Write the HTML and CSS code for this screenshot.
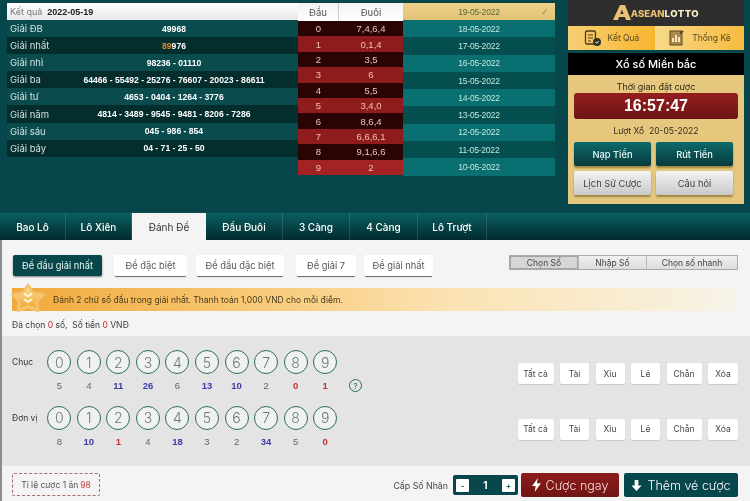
FILE: index.html
```html
<!DOCTYPE html>
<html lang="vi">
<head>
<meta charset="utf-8">
<title>Aseanlotto</title>
<link rel="stylesheet" href="styles.css">
</head>
<body>
<section class="top">
  <div class="results">
    <div class="res-head"><span class="muted">Kết quả</span><b>2022-05-19</b></div>
    <div class="res-row"><span class="res-l">Giải ĐB</span><span class="res-v">49968</span></div>
    <div class="res-row"><span class="res-l">Giải nhất</span><span class="res-v"><em>89</em>976</span></div>
    <div class="res-row"><span class="res-l">Giải nhì</span><span class="res-v">98236 - 01110</span></div>
    <div class="res-row"><span class="res-l">Giải ba</span><span class="res-v">64466 - 55492 - 25276 - 76607 - 20023 - 86611</span></div>
    <div class="res-row"><span class="res-l">Giải tư</span><span class="res-v">4653 - 0404 - 1264 - 3776</span></div>
    <div class="res-row"><span class="res-l">Giải năm</span><span class="res-v">4814 - 3489 - 9545 - 9481 - 8206 - 7286</span></div>
    <div class="res-row"><span class="res-l">Giải sáu</span><span class="res-v">045 - 986 - 854</span></div>
    <div class="res-row"><span class="res-l">Giải bảy</span><span class="res-v">04 - 71 - 25 - 50</span></div>
  </div>
  <div class="heads">
    <div class="h-head"><span class="c1">Đầu</span><span class="c2">Đuôi</span></div>
    <div class="h-row"><span class="c1">0</span><span class="c2">7,4,6,4</span></div>
    <div class="h-row"><span class="c1">1</span><span class="c2">0,1,4</span></div>
    <div class="h-row"><span class="c1">2</span><span class="c2">3,5</span></div>
    <div class="h-row"><span class="c1">3</span><span class="c2">6</span></div>
    <div class="h-row"><span class="c1">4</span><span class="c2">5,5</span></div>
    <div class="h-row"><span class="c1">5</span><span class="c2">3,4,0</span></div>
    <div class="h-row"><span class="c1">6</span><span class="c2">8,6,4</span></div>
    <div class="h-row"><span class="c1">7</span><span class="c2">6,6,6,1</span></div>
    <div class="h-row"><span class="c1">8</span><span class="c2">9,1,6,6</span></div>
    <div class="h-row"><span class="c1">9</span><span class="c2">2</span></div>
  </div>
  <div class="dates">
    <div class="d-row d-on">19-05-2022<i>✓</i></div>
    <div class="d-row">18-05-2022</div>
    <div class="d-row">17-05-2022</div>
    <div class="d-row">16-05-2022</div>
    <div class="d-row">15-05-2022</div>
    <div class="d-row">14-05-2022</div>
    <div class="d-row">13-05-2022</div>
    <div class="d-row">12-05-2022</div>
    <div class="d-row">11-05-2022</div>
    <div class="d-row">10-05-2022</div>
  </div>
  <aside class="side">
    <div class="logo"><svg class="logo-a" viewBox="0 0 18 15" width="18" height="15"><path d="M0 15 7 0h5l6 15h-5l-1-3H6l-1 3z" fill="#e8c172"/><path d="M7.300 9h3.300L9 4.500z" fill="#2e2e2e"/></svg><span class="logo-t">ASEAN</span><span class="logo-u">LOTTO</span></div>
    <div class="s-tabs">
      <div class="s-tab s-tab-on"><svg viewBox="0 0 18 18" width="18" height="18"><rect x="1.500" y="2" width="10" height="13" rx="1.500" fill="none" stroke="#4a3a1c" stroke-width="1.300"/><path d="M4 6h5M4 9h5M4 12h3" stroke="#4a3a1c"/><circle cx="13" cy="13" r="4" fill="#33302a"/><path d="m11.300 13 1.300 1.300 2-2.300" stroke="#fff" fill="none"/></svg>Kết Quả</div>
      <div class="s-tab"><svg viewBox="0 0 18 18" width="18" height="18"><rect x="2" y="2" width="12" height="14" fill="#a88a4a" stroke="#5b4a25"/><path d="M4 13V9h2v4zm3 0V6h2v7zm3 0V8h2v5z" fill="#f6e6b8"/><path d="m12 2 4 0-4 4z" fill="#5b4a25"/></svg>Thống Kê</div>
    </div>
    <div class="s-title">Xổ số Miền bắc</div>
    <div class="s-body">
      <div class="s-cap">Thời gian đặt cược</div>
      <div class="timer">16:57:47</div>
      <div class="s-draw">Lượt Xổ&nbsp; 20-05-2022</div>
      <div class="s-btns">
        <a class="btn-teal">Nạp Tiền</a><a class="btn-teal">Rút Tiền</a>
        <a class="btn-grey">Lịch Sử Cược</a><a class="btn-grey">Câu hỏi</a>
      </div>
    </div>
  </aside>
</section>

<nav class="tabs">
  <a class="tab t66">Bao Lô</a><a class="tab t66">Lô Xiên</a><a class="tab tab-on">Đánh Đề</a><a class="tab t77">Đầu Đuôi</a><a class="tab t67">3 Càng</a><a class="tab t68">4 Càng</a><a class="tab t69">Lô Trượt</a>
</nav>

<main class="main">
  <div class="sub">
    <div class="pills">
      <a class="pill pill-on p1">Đề đầu giải nhất</a>
      <a class="pill p2">Đề đặc biệt</a>
      <a class="pill p3">Đề đầu đặc biệt</a>
      <a class="pill p4">Đề giải 7</a>
      <a class="pill p5">Đề giải nhất</a>
    </div>
    <div class="seg"><a class="seg-on s68">Chọn Số</a><a class="s68">Nhập Số</a><a class="s93">Chọn số nhanh</a></div>
  </div>
  <div class="banner">
    <svg class="star" viewBox="0 0 36 30" width="36" height="30"><defs><linearGradient id="sg" x1="0" y1="0" x2="0" y2="1"><stop offset="0" stop-color="#fbe7ac"/><stop offset=".5" stop-color="#f5c35e"/><stop offset="1" stop-color="#eda22e"/></linearGradient></defs><path d="M18 2 23 10 33.500 11.500 26.500 18.500 28 27.500 18 23.500 8 27.500 9.500 18.500 2.500 11.500 13 10z" fill="url(#sg)" stroke="#f3c26c" stroke-width="3" stroke-linejoin="round"/><path d="m14 10.500 4 3 4-3M14 16l4 3 4-3" fill="none" stroke="#fff6dc" stroke-width="2"/></svg>
    <span>Đánh 2 chữ số đầu trong giải nhất. Thanh toán 1,000 VND cho mỗi điểm.</span>
  </div>
  <p class="picked">Đã chọn <em>0</em> số,&nbsp; Số tiền <em>0</em> VNĐ</p>

  <div class="panel">
    <div class="pick-row">
      <span class="pick-l">Chục</span>
      <div class="nums">
        <div class="n"><b>0</b><span>5</span></div>
        <div class="n"><b>1</b><span>4</span></div>
        <div class="n"><b>2</b><span class="hi">11</span></div>
        <div class="n"><b>3</b><span class="hi">26</span></div>
        <div class="n"><b>4</b><span>6</span></div>
        <div class="n"><b>5</b><span class="hi">13</span></div>
        <div class="n"><b>6</b><span class="hi">10</span></div>
        <div class="n"><b>7</b><span>2</span></div>
        <div class="n"><b>8</b><span class="lo">0</span></div>
        <div class="n"><b>9</b><span class="lo">1</span></div>
      </div>
      <span class="help">?</span>
      <div class="quick"><a class="q36">Tất cả</a><a class="q29">Tài</a><a class="q29">Xỉu</a><a class="q29">Lẻ</a><a class="q35">Chẵn</a><a class="q30">Xóa</a></div>
    </div>
    <div class="pick-row">
      <span class="pick-l">Đơn vị</span>
      <div class="nums">
        <div class="n"><b>0</b><span>8</span></div>
        <div class="n"><b>1</b><span class="hi">10</span></div>
        <div class="n"><b>2</b><span class="lo">1</span></div>
        <div class="n"><b>3</b><span>4</span></div>
        <div class="n"><b>4</b><span class="hi">18</span></div>
        <div class="n"><b>5</b><span>3</span></div>
        <div class="n"><b>6</b><span>2</span></div>
        <div class="n"><b>7</b><span class="hi">34</span></div>
        <div class="n"><b>8</b><span>5</span></div>
        <div class="n"><b>9</b><span class="lo">0</span></div>
      </div>
      <span class="help help-empty"></span>
      <div class="quick"><a class="q36">Tất cả</a><a class="q29">Tài</a><a class="q29">Xỉu</a><a class="q29">Lẻ</a><a class="q35">Chẵn</a><a class="q30">Xóa</a></div>
    </div>
  </div>

  <div class="bottom">
    <div class="rate">Tỉ lệ cược 1 ăn <em>98</em></div>
    <div class="actions">
      <span class="mult-l">Cấp Số Nhân</span>
      <div class="stepper"><i>-</i><b>1</b><i>+</i></div>
      <a class="act act-red"><svg viewBox="0 0 10 16" width="9" height="14"><path d="M6.500 0 0 9h4l-1 7 7-10H5.500z" fill="#fff"/></svg>Cược ngay</a>
      <a class="act act-teal"><svg viewBox="0 0 12 14" width="11" height="13"><path d="M4 1h4v6h3.500L6 13 .500 7H4z" fill="#fff"/></svg>Thêm vé cược</a>
    </div>
  </div>
</main>
</body>
</html>
```

FILE: styles.css
```css
* { box-sizing: border-box; }
html, body { margin: 0; padding: 0; }
html { background: #f4f4f4; overflow: hidden; }
body {
  width: 750px;
  height: 501px;
  overflow: hidden;
  font-family: "Inter", "Liberation Sans", sans-serif;
  font-size: 9.5px;
  color: #3a3a3a;
  background: #f4f4f4;
  filter: blur(0.35px);
}
em, i { font-style: normal; }
a { display: flex; align-items: center; justify-content: center; }

/* top area */
.top {
  height: 212px;
  display: flex;
  align-items: flex-start;
  padding: 3px 0 0 7px;
  background: #07474b;
}
.results { width: 291px; flex: none; }
.res-head {
  height: 17px;
  padding-left: 3px;
  display: flex;
  align-items: center;
  gap: 5px;
  background: linear-gradient(#fff, #e8e8e8);
  color: #222;
  font-size: 9px;
}
.res-head b { font-family: "Liberation Sans", sans-serif; font-size: 9px; font-weight: 700; }
.muted { color: #777; }
.res-row {
  height: 17.100px;
  display: flex;
  align-items: center;
  color: #fff;
  font-size: 9.500px;
  background: #0a4b4e;
}
.res-row:nth-child(odd) { background: #042d2e; }
.res-l { width: 60px; flex: none; padding-left: 3px; color: #d3e0e0; }
.res-v {
  width: 228px;
  flex: none;
  margin-left: -7px;
  text-align: center;
  font-family: "Liberation Sans", sans-serif;
  font-size: 8.600px;
  font-weight: 700;
  white-space: nowrap;
}
.res-v em { color: #e08a2a; }

.heads { width: 105px; flex: none; }
.h-head {
  height: 18px;
  display: flex;
  background: linear-gradient(#f2f2f2, #fff);
  color: #555;
  font-size: 9.500px;
}
.h-head .c1 { border-right: 1px solid #ccc; }
.c1 { width: 41px; flex: none; text-align: center; align-self: center; }
.c2 { flex: 1; text-align: center; align-self: center; }
.h-head .c1, .h-head .c2 { align-self: stretch; display: flex; align-items: center; justify-content: center; }
.h-row {
  height: 15.400px;
  display: flex;
  font-family: "Liberation Sans", sans-serif;
  font-size: 9.500px;
  color: #f0c4a8;
  background: #8e1c1c;
}
.h-row:nth-child(even) { background: #2a0304; color: #e8c8b8; }
.h-row:last-child { background: #a32222; }

.dates { width: 152px; flex: none; }
.d-row {
  height: 17.300px;
  position: relative;
  display: flex;
  align-items: center;
  justify-content: center;
  font-family: "Liberation Sans", sans-serif;
  font-size: 8.500px;
  letter-spacing: -0.2px;
  color: #bfe8dc;
  background: #054e50;
}
.d-row:nth-child(even) { background: #0a6f70; }
.d-on { height: 17px; background: linear-gradient(#ecd08a, #e4c274); color: #5c6a3c; }
.d-on i { position: absolute; right: 6px; color: #8a8a4a; font-size: 9px; }

.side { width: 176px; flex: none; margin: -3px 0 0 13px; }
.logo {
  height: 26px;
  display: flex;
  align-items: center;
  justify-content: center;
  background: #2e2e2e;
  color: #e8c172;
  font-size: 9.500px;
  font-weight: 800;
}
.logo-a { margin-bottom: 1px; }
.logo-u { color: #fff2cc; letter-spacing: 0.500px; }
.s-tabs { height: 24px; display: flex; }
.s-tab {
  flex: 1;
  display: flex;
  align-items: center;
  justify-content: center;
  gap: 6px;
  background: linear-gradient(90deg, #f8d98a, #f7bb3e);
  color: #5a4a20;
  font-size: 8.500px;
}
.s-tab-on { width: 87px; flex: none; background: linear-gradient(90deg, #f6cf75, #f7b62f); }
.s-title {
  margin-top: 3px;
  height: 22px;
  display: flex;
  align-items: center;
  justify-content: center;
  background: #000;
  color: #fff;
  font-size: 11px;
  font-weight: 500;
}
.s-body { height: 129px; padding: 4px 6px 0; background: #e5c87d; color: #2f2a1a; }
.s-cap { height: 14px; display: flex; align-items: center; justify-content: center; font-size: 9px; }
.timer {
  height: 26px;
  display: flex;
  align-items: center;
  justify-content: center;
  background: linear-gradient(#941e1e, #6e1414);
  border-radius: 3px;
  color: #fff;
  font-family: "Liberation Sans", sans-serif;
  font-size: 16px;
  font-weight: 700;
}
.s-draw { height: 23px; display: flex; align-items: center; justify-content: center; font-size: 8.500px; }
.s-btns { display: grid; grid-template-columns: 77px 77px; column-gap: 5px; row-gap: 5px; }
.btn-teal, .btn-grey { height: 24px; border-radius: 2px; font-size: 9.300px; font-weight: 500; box-shadow: 0 2px 2px rgba(70, 50, 0, .45); white-space: nowrap; }
.btn-teal { background: linear-gradient(#0d6a6c, #07393c); color: #e6fbf6; }
.btn-grey { background: linear-gradient(#f3f3f3, #c9c9c9); color: #444; font-weight: 400; }

/* tabs */
.tabs {
  height: 28px;
  display: flex;
  background: linear-gradient(#0a5f62, #032a2c);
  border-top: 1px solid #0a4b4e;
}
.tab {
  flex: none;
  color: #fff;
  font-size: 10px;
  font-weight: 500;
  border-right: 1px solid rgba(255, 255, 255, .12);
}
.t66 { width: 66px; }
.t67 { width: 67px; }
.t68 { width: 68px; }
.t69 { width: 69px; }
.t77 { width: 77px; }
.tab-on { width: 74px; background: #f4f4f4; color: #333; border: 0; font-weight: 400; }

/* main */
.main { height: 261px; border-left: 2px solid #8c8c8c; background: #f4f4f4; }
.sub { display: flex; justify-content: space-between; padding: 15px 12px 0 11px; height: 48px; }
.pills { display: flex; align-items: flex-start; }
.pill {
  height: 21px;
  background: #fff;
  color: #555;
  font-size: 9.300px;
  box-shadow: 0 2px 1px -1px #666;
  border-radius: 2px;
  white-space: nowrap;
}
.pill-on { background: #07474b; color: #e8f6f2; box-shadow: 0 1px 2px #777; }
.p1 { width: 89px; }
.p2 { width: 73px; margin-left: 12px; }
.p3 { width: 88px; margin-left: 9px; }
.p4 { width: 60px; margin-left: 12px; }
.p5 { width: 69px; margin-left: 8px; }
.seg { display: flex; height: 15px; border: 1px solid #aaa; background: linear-gradient(#f0f0f0, #dcdcdc); font-size: 8.500px; color: #444; width: 229px; }
.seg a + a { border-left: 1px solid #bbb; }
.s68 { width: 68px; }
.s93 { flex: 1; }
.seg-on { background: #d6d6d6; box-shadow: inset 0 0 0 1px #a4a4a4; }
.banner {
  position: relative;
  height: 23px;
  margin: 0 12px 0 10px;
  padding-left: 41px;
  display: flex;
  align-items: center;
  background: linear-gradient(90deg, #f0a93a 0, #f7c671 30%, #fbe2b2 60%, #f8efd9 90%, #f6f3ea 100%);
  color: #4a3a1c;
  font-size: 8.500px;
  white-space: nowrap;
}
.star { position: absolute; left: -2px; top: -5px; }
.picked { margin: 0; height: 25px; padding: 9px 0 0 10px; font-size: 8.500px; color: #3a3a3a; }
.picked em { color: #c02a2a; }

.panel { height: 130px; background: #e4e4e4; padding-top: 14px; }
.pick-row { height: 55.500px; display: flex; align-items: flex-start; }
.pick-l { width: 37px; flex: none; padding: 7px 0 0 10px; font-size: 8.500px; white-space: nowrap; color: #333; }
.nums { display: flex; flex: none; margin-left: 5.500px; }
.n { width: 29.550px; display: flex; flex-direction: column; align-items: center; }
.n b {
  width: 24px;
  height: 24px;
  border: 1.500px solid #2d6b60;
  border-radius: 50%;
  display: flex;
  align-items: center;
  justify-content: center;
  font-weight: 300;
  font-size: 14px;
  color: #6a7a78;
  background: #f0f2f0;
}
.n span { margin-top: 6px; font-family: "Liberation Sans", sans-serif; font-size: 9.500px; color: #666; }
.n .hi { color: #3a3aa8; font-weight: 700; }
.n .lo { color: #c93030; font-weight: 700; }
.help {
  width: 13px;
  height: 13px;
  flex: none;
  margin: 29px 0 0 9px;
  border: 1.200px solid #2d6b60;
  border-radius: 50%;
  display: flex;
  align-items: center;
  justify-content: center;
  font-size: 8px;
  color: #2d6b60;
}
.help-empty { border: 0; }
.quick { display: flex; gap: 6.500px; margin: 13px 0 0 auto; padding-right: 12px; }
.quick a {
  height: 21px;
  background: #fff;
  border-radius: 2px;
  font-size: 8.500px;
  color: #444;
  box-shadow: 0 1px 1px rgba(0, 0, 0, .12);
}
.q36 { width: 36px; }
.q29 { width: 29px; }
.q35 { width: 35px; }
.q30 { width: 30px; }

.bottom { display: flex; justify-content: space-between; padding: 7px 12px 0 10px; }
.rate {
  width: 88px;
  height: 23px;
  display: flex;
  align-items: center;
  justify-content: center;
  border: 1px dashed #b06a6a;
  border-radius: 2px;
  font-size: 8.500px;
  color: #555;
}
.rate em { color: #c0483c; margin-left: 2px; }
.actions { display: flex; align-items: center; }
.mult-l { font-size: 8.800px; color: #444; margin-right: 5px; }
.stepper {
  width: 65px;
  height: 20px;
  display: flex;
  align-items: center;
  justify-content: space-between;
  padding: 0 3px;
  background: #07474b;
  border-radius: 2px;
  color: #fff;
  font-size: 10px;
}
.stepper i { width: 13px; height: 13px; background: #fff; color: #07474b; display: flex; align-items: center; justify-content: center; font-size: 9px; border-radius: 1px; }
.act { height: 24px; gap: 5px; color: #fff; font-size: 12.500px; font-weight: 300; border-radius: 2px; }
.act-red { width: 98px; margin-left: 3px; background: linear-gradient(#8e1c1c, #701414); color: #f8dcdc; }
.act-teal { width: 114px; margin-left: 5px; background: #07474b; }
```
